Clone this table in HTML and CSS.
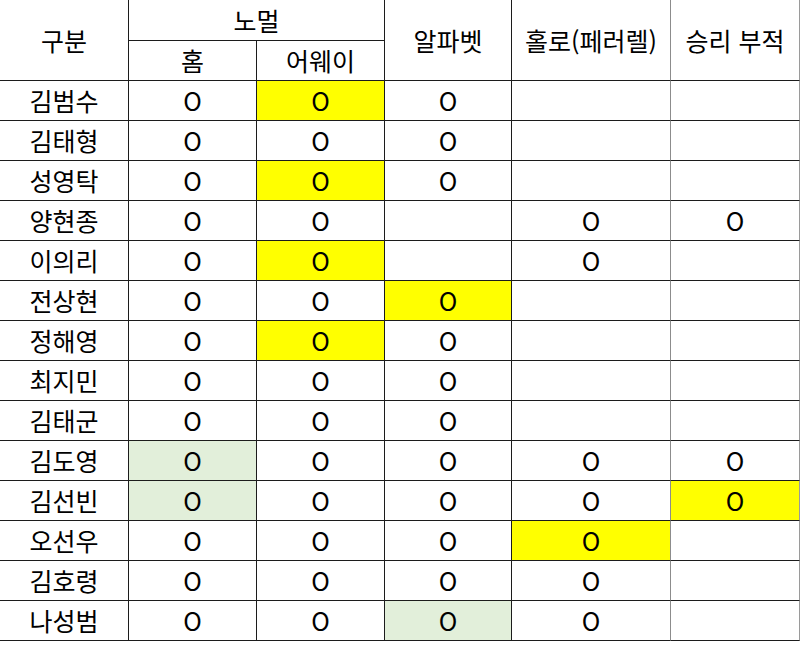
FILE: index.html
```html
<!DOCTYPE html>
<html lang="ko">
<head>
<meta charset="utf-8">
<title>표</title>
<link rel="stylesheet" href="styles.css">
</head>
<body>
<div class="sheet">
  <div class="c h name-h">구분</div>
  <div class="c h normal-h">노멀</div>
  <div class="c h alpha-h">알파벳</div>
  <div class="c h holo-h">홀로(페러렐)</div>
  <div class="c h win-h last">승리 부적</div>
  <div class="c h sub">홈</div>
  <div class="c h sub">어웨이</div>

  <div class="c">김범수</div><div class="c">O</div><div class="c y">O</div><div class="c">O</div><div class="c holo"></div><div class="c last"></div>
  <div class="c">김태형</div><div class="c">O</div><div class="c">O</div><div class="c">O</div><div class="c holo"></div><div class="c last"></div>
  <div class="c">성영탁</div><div class="c">O</div><div class="c y">O</div><div class="c">O</div><div class="c holo"></div><div class="c last"></div>
  <div class="c">양현종</div><div class="c">O</div><div class="c">O</div><div class="c"></div><div class="c holo">O</div><div class="c last">O</div>
  <div class="c">이의리</div><div class="c">O</div><div class="c y">O</div><div class="c"></div><div class="c holo">O</div><div class="c last"></div>
  <div class="c">전상현</div><div class="c">O</div><div class="c">O</div><div class="c y">O</div><div class="c holo"></div><div class="c last"></div>
  <div class="c">정해영</div><div class="c">O</div><div class="c y">O</div><div class="c">O</div><div class="c holo"></div><div class="c last"></div>
  <div class="c">최지민</div><div class="c">O</div><div class="c">O</div><div class="c">O</div><div class="c holo"></div><div class="c last"></div>
  <div class="c">김태군</div><div class="c">O</div><div class="c">O</div><div class="c">O</div><div class="c holo"></div><div class="c last"></div>
  <div class="c">김도영</div><div class="c g">O</div><div class="c">O</div><div class="c">O</div><div class="c holo">O</div><div class="c last">O</div>
  <div class="c">김선빈</div><div class="c g">O</div><div class="c">O</div><div class="c">O</div><div class="c holo">O</div><div class="c last y">O</div>
  <div class="c">오선우</div><div class="c">O</div><div class="c">O</div><div class="c">O</div><div class="c holo y">O</div><div class="c last"></div>
  <div class="c">김호령</div><div class="c">O</div><div class="c">O</div><div class="c">O</div><div class="c holo">O</div><div class="c last"></div>
  <div class="c">나성범</div><div class="c">O</div><div class="c">O</div><div class="c g">O</div><div class="c holo">O</div><div class="c last"></div>
</div>
</body>
</html>
```

FILE: styles.css
```css
html, body {
  margin: 0;
  padding: 0;
  background: #ffffff;
}

body {
  width: 800px;
  height: 645px;
  overflow: hidden;
  font-family: "Noto Sans CJK KR", "Noto Sans", sans-serif;
  color: #000000;
}

.sheet {
  display: grid;
  grid-template-columns: 129px 128px 128px 127px 159px 129px;
  grid-template-rows: 41px 40px repeat(14, 40px);
  width: 800px;
}

.c {
  box-sizing: border-box;
  display: flex;
  align-items: center;
  justify-content: center;
  border-right: 1px solid #1c1c1c;
  border-bottom: 1px solid #1c1c1c;
  font-size: 25px;
  line-height: 1;
  white-space: nowrap;
}

.c.holo {
  border-right-color: #8c8c8c;
}

.c.last {
  border-right-color: #9a9a9a;
}

.name-h {
  grid-column: 1;
  grid-row: 1 / span 2;
}

.normal-h {
  grid-column: 2 / span 2;
  grid-row: 1;
}

.alpha-h {
  grid-column: 4;
  grid-row: 1 / span 2;
}

.holo-h {
  grid-column: 5;
  grid-row: 1 / span 2;
  border-right-color: #8c8c8c;
}

.win-h {
  grid-column: 6;
  grid-row: 1 / span 2;
}

.sub {
  grid-row: 2;
}

.y {
  background: #ffff00;
}

.g {
  background: #e2efda;
}
```
